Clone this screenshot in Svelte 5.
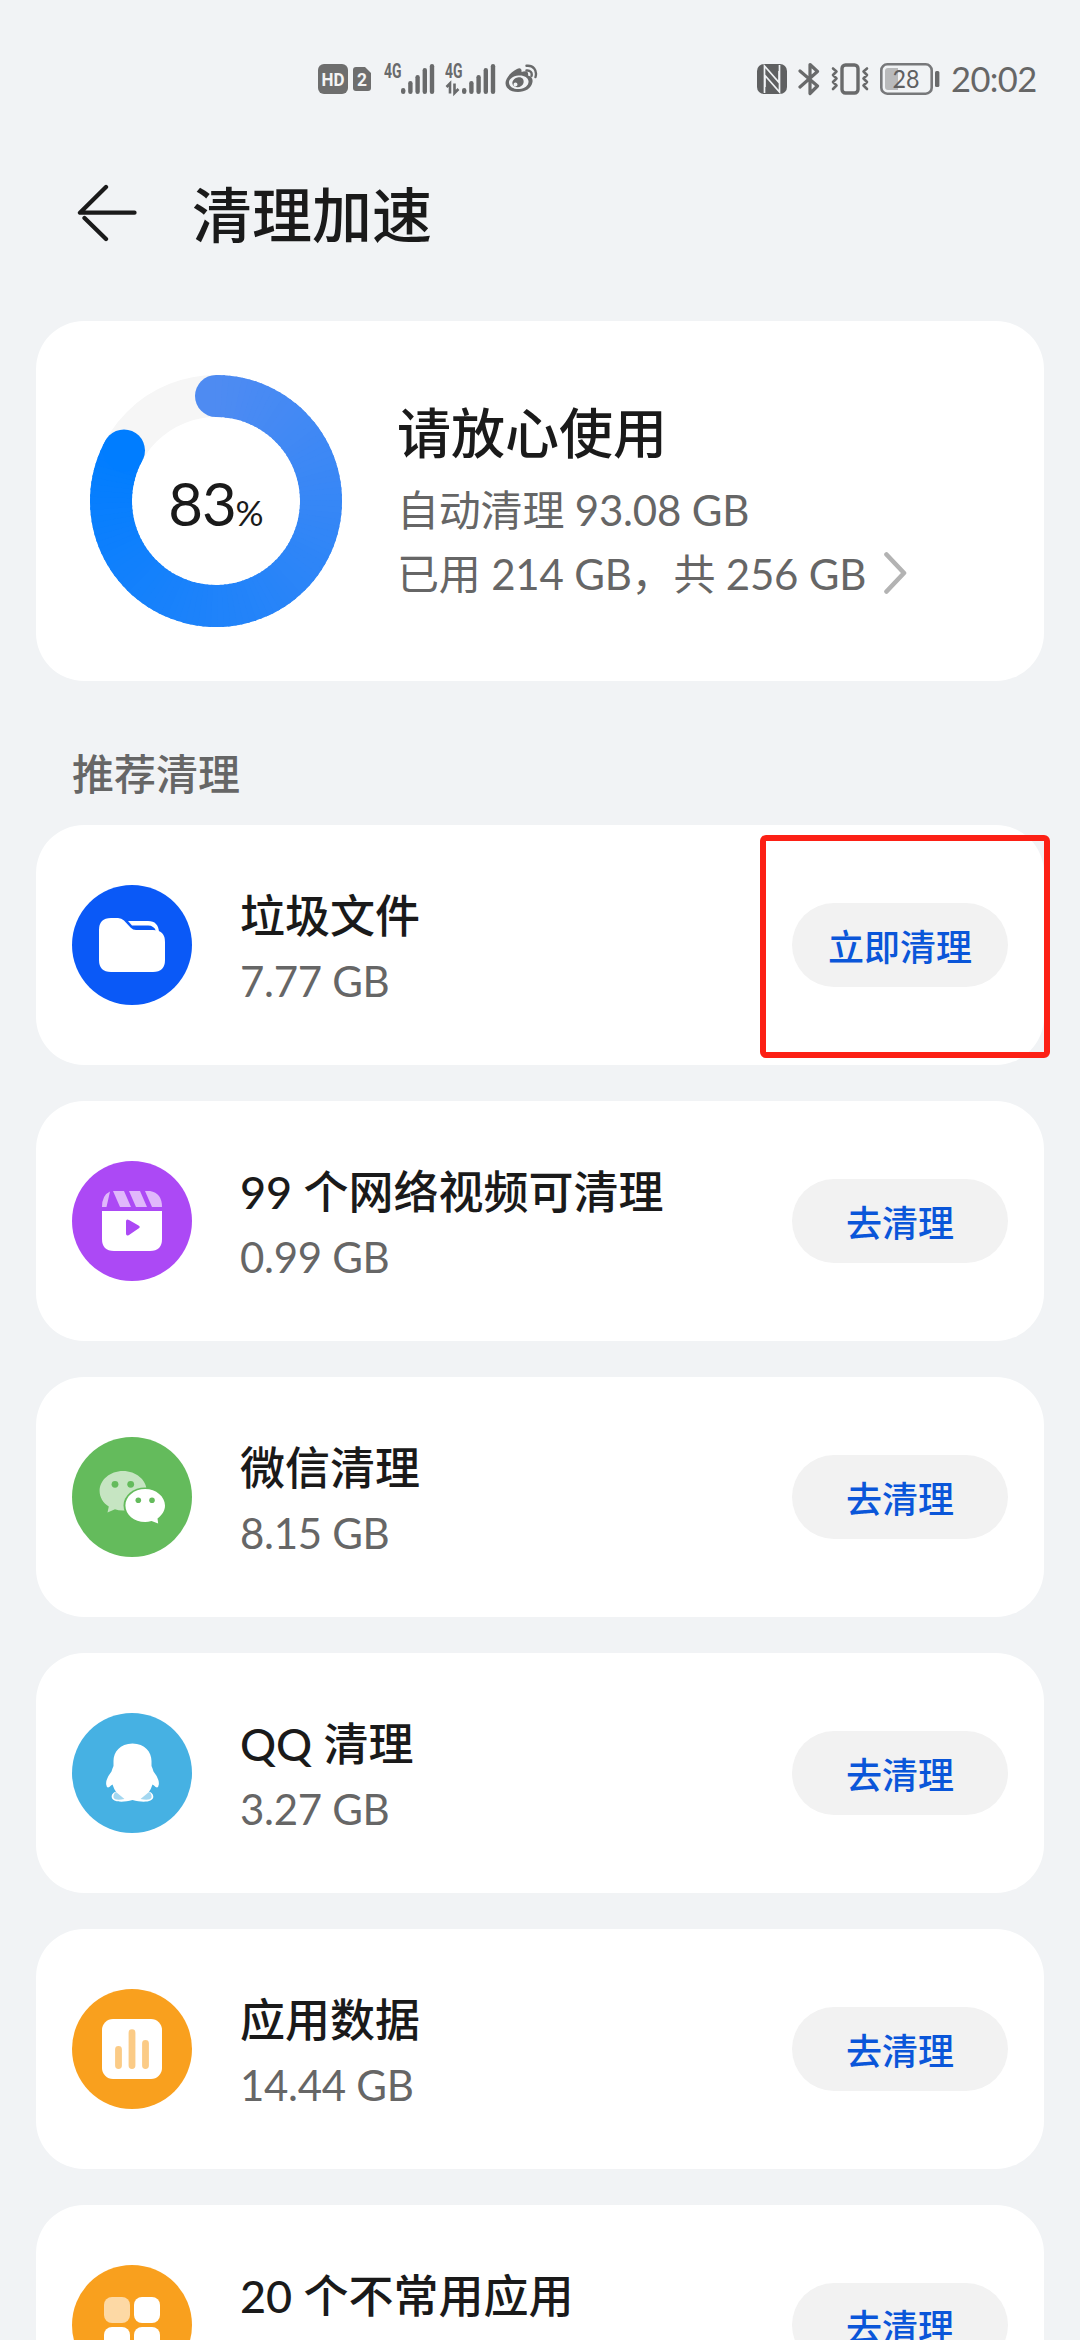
<script>
  const percent = 83;
  const start = [78, 139, 242];
  const end = [0, 125, 255];
  const steps = 100;

  function point(angle) {
    const a = ((angle - 90) * Math.PI) / 180;
    return [126 + 105 * Math.cos(a), 126 + 105 * Math.sin(a)];
  }
  function mix(t) {
    return `rgb(${start.map((s, i) => Math.round(s + (end[i] - s) * t)).join(',')})`;
  }

  const sweep = percent * 3.6;
  const segments = Array.from({ length: steps }, (_, i) => {
    const [x1, y1] = point((sweep * i) / steps);
    const [x2, y2] = point(Math.min(sweep, (sweep * (i + 1.4)) / steps));
    return { d: `M${x1} ${y1}A105 105 0 0 1 ${x2} ${y2}`, color: mix(i / (steps - 1)) };
  });
  const first = point(0);
  const last = point(sweep);

  const rows = [
    { icon: 'folder', color: '#0a59f7', title: '垃圾文件', size: '7.77 GB', action: '立即清理', marked: true },
    { icon: 'video', color: '#ac49f5', title: '99 个网络视频可清理', size: '0.99 GB', action: '去清理' },
    { icon: 'wechat', color: '#64bb5c', title: '微信清理', size: '8.15 GB', action: '去清理' },
    { icon: 'qq', color: '#46b1e3', title: 'QQ 清理', size: '3.27 GB', action: '去清理' },
    { icon: 'chart', color: '#f9a01e', title: '应用数据', size: '14.44 GB', action: '去清理' },
    { icon: 'apps', color: '#f9a01e', title: '20 个不常用应用', size: '', action: '去清理' }
  ];
  const barHeights = [6, 13, 19, 26, 30];
</script>

{#snippet signal(data)}
  <svg class="signal" width="52" height="48" viewBox="0 -8 52 48">
    <text x="0" y="14.5" class="net" textLength="17.500" lengthAdjust="spacingAndGlyphs">4G</text>
    {#if data}
      <path d="M1.500 24L5 20.500V30.500M9.500 20.500V30L13.500 26" fill="none" stroke="#696a6b" stroke-width="2.600" />
    {/if}
    {#each barHeights as h, i}
      <rect x={17 + i * 7.2} y={31 - h} width="4.4" height={h} rx="2.2" fill="#696a6b" />
    {/each}
  </svg>
{/snippet}

<div class="screen">
  <div class="status">
    <div class="left">
      <svg class="hd" width="30" height="30" viewBox="0 0 30 30">
        <rect width="30" height="30" rx="6" fill="#6e6e6e" />
        <text x="3.500" y="21.500" class="badge" font-size="18" textLength="23" lengthAdjust="spacingAndGlyphs">HD</text>
      </svg>
      <svg class="sim" width="18" height="24" viewBox="0 0 18 24">
        <path d="M3 0H12L18 6V21Q18 24 15 24H3Q0 24 0 21V3Q0 0 3 0Z" fill="#6e6e6e" />
        <text x="4" y="19" class="badge" font-size="19" textLength="10" lengthAdjust="spacingAndGlyphs">2</text>
      </svg>
      {@render signal(false)}
      {@render signal(true)}
      <svg class="weibo" width="33" height="29" viewBox="0 0 33 29">
        <path fill-rule="evenodd" fill="#696a6b" d="M12 5C14.500 3.500 17 4 16.500 8C20 6.500 24 6.500 23 11.500C26.500 12.500 28 14.500 27.500 18C26.500 24.500 20 28 13 28C6 28 .5 24.500 .5 19C.5 14 6 8 12 5ZM13.500 11.500C7.500 12 3.500 15.500 4 19C4.500 23 9 25.500 14.500 25C20 24.500 24 21 23.500 17C23 13.500 19 11 13.500 11.500Z" />
        <path fill-rule="evenodd" fill="#696a6b" d="M12.500 13.500C16.500 12.500 19.500 15 18.500 19C17.500 22.500 13 24.500 9.500 22.500C5.500 20 7.500 14.500 12.500 13.500ZM10.500 18.500A2 2 0 1 0 12.500 20.300A2 2 0 0 0 10.500 18.500Z" />
        <path d="M21.500 6.500C25 6 27.500 8.500 26.500 12M21.500 1.800C28 1 32.500 6 30.500 13" fill="none" stroke="#696a6b" stroke-width="2.400" stroke-linecap="round" />
      </svg>
    </div>
    <div class="right">
      <svg class="nfc" width="30" height="30" viewBox="0 0 30 30">
        <rect width="30" height="30" rx="7" fill="#5f6061" />
        <path d="M7.500 29V2L22 18.500V7M22.500 1V28L8 11.500V23" fill="none" stroke="#f1f3f5" stroke-width="1.700" />
      </svg>
      <svg class="bt" width="22" height="34" viewBox="0 0 22 34">
        <path d="M2 9L19.500 24L12 31.500V2.500L19.500 9.500L2 25" fill="none" stroke="#696a6b" stroke-width="3.200" stroke-linejoin="round" stroke-linecap="round" />
      </svg>
      <svg class="vib" width="38" height="32" viewBox="0 0 38 32">
        <rect x="11" y="2" width="16" height="28" rx="3.500" fill="none" stroke="#696a6b" stroke-width="3.400" />
        <path d="M2 5.500L5.500 8.500L2 12L5.500 15.500L2 19L5.500 22.500L2 26M36 5.500L32.500 8.500L36 12L32.500 15.500L36 19L32.500 22.500L36 26" fill="none" stroke="#696a6b" stroke-width="2.600" stroke-linejoin="round" stroke-linecap="round" />
      </svg>
      <svg class="bat" width="60" height="32" viewBox="0 0 60 32">
        <rect x="1.300" y="1.300" width="50.400" height="29.400" rx="6" fill="none" stroke="#77787a" stroke-width="2.600" />
        <path d="M8 5H18V27H8Q5 27 5 24V8Q5 5 8 5Z" fill="#b9babb" />
        <rect x="55" y="8" width="4.400" height="16" rx="1.500" fill="#696a6b" />
        <text x="12.500" y="25" class="level" textLength="27" lengthAdjust="spacingAndGlyphs">28</text>
      </svg>
      <span class="clock">20:02</span>
    </div>
  </div>

  <header>
    <svg width="62" height="58" viewBox="0 0 62 58">
      <path d="M30 3L4 28.700H58.500M8.500 34L30 55" fill="none" stroke="#1a1a1a" stroke-width="4.300" stroke-linecap="round" stroke-linejoin="round" />
    </svg>
    <h1>清理加速</h1>
  </header>

  <section class="card summary">
    <div class="ring">
      <svg width="252" height="252" viewBox="0 0 252 252">
        <circle cx="126" cy="126" r="105" fill="none" stroke="#f6f6f6" stroke-width="42" />
        <circle cx={first[0]} cy={first[1]} r="21" fill={mix(0)} />
        {#each segments as s}
          <path d={s.d} fill="none" stroke={s.color} stroke-width="42" />
        {/each}
        <circle cx={last[0]} cy={last[1]} r="21" fill={mix(1)} />
      </svg>
      <div class="percent"><span class="num">83</span><span class="sign">%</span></div>
    </div>
    <div class="info">
      <h2>请放心使用</h2>
      <p>自动清理 93.08 GB</p>
      <p class="used">
        <span>已用 214 GB，共 256 GB</span>
        <svg width="24" height="44" viewBox="0 0 24 44">
          <path d="M3.500 3.500L21 22L3.500 40.500" fill="none" stroke="#b3b3b3" stroke-width="4.600" stroke-linecap="round" stroke-linejoin="round" />
        </svg>
      </p>
    </div>
  </section>

  <h3>推荐清理</h3>

  <div class="list">
    {#each rows as row}
      <section class="card row">
        <svg width="120" height="120" viewBox="0 0 120 120">
          <circle cx="60" cy="60" r="60" fill={row.color} />
          {#if row.icon === 'folder'}
            <path d="M39 33H46Q49.500 33 52 35.500L58.500 42.500Q61 45 64 45H81Q93 45 93 57V75Q93 87 81 87H39Q27 87 27 75V45Q27 33 39 33Z" fill="#fff" />
            <path d="M56 36H76Q86.500 36 87 47.500L84 46Q82 40.500 76 40.500H60Z" fill="#fff" />
          {:else if row.icon === 'video'}
            <path d="M30 50H90V78Q90 90 78 90H42Q30 90 30 78Z" fill="#fff" />
            <path d="M30 46Q30 34 38 30.500L34.500 46ZM41 30H52L59 46H48ZM57 30H68L75 46H64ZM73 30H78Q90 32 90 46H80Z" fill="#e0b8fb" />
            <path d="M54 60.500Q54 57.500 57 59L66.500 64.500Q69 66 66.500 67.500L57 74Q54 75.500 54 72.500Z" fill={row.color} />
          {:else if row.icon === 'wechat'}
            <path d="M51 34C64 34 74.700 43 74.700 54C74.700 65 64 73.500 51 73.500Q46 73.500 43 72.300L35.500 75.500L36.800 69.500C31 66 27.600 60 27.600 54C27.600 43 38 34 51 34Z" fill="#c6e5c2" />
            <ellipse cx="73" cy="68.500" rx="21.500" ry="18" fill={row.color} />
            <path d="M73.200 52C84 52 93 59.500 93 68.500C93 74 90 78 85.500 81.500L86.200 86.500L79.500 84Q76 85 73.200 85C62 85 53.400 77.500 53.400 68.500C53.400 59.500 62 52 73.200 52Z" fill="#fff" />
            <g fill={row.color}>
              <circle cx="43" cy="47.300" r="3.400" /><circle cx="58.700" cy="47.300" r="3.400" />
              <circle cx="66.300" cy="63.200" r="2.800" /><circle cx="80" cy="63.200" r="2.800" />
            </g>
          {:else if row.icon === 'qq'}
            <path d="M47 78C42 78.500 39.500 81 39.700 84C40 89 50 90 60.500 87C71 90 81 89 81.300 84C81.500 81 79 78.500 74 78Z" fill="#fff" />
            <path d="M60.500 30.400C73 30.400 79.500 39 79.500 48V53Q80.500 55 81.500 58.500Q87.500 66 86.800 71.500Q86 77 82 72.500L80.500 71.500Q78 80 70 86H51Q43 80 40.500 71.500L39 72.500Q35 77 34.200 71.500Q33.500 66 39.500 58.500Q40.500 55 41.500 53V48C41.500 39 48 30.400 60.500 30.400Z" fill="#fff" />
            <path d="M44 79L52.500 86Q43 88 41.500 84.500Q41 81 44 79ZM77 79L68.500 86Q78 88 79.500 84.500Q80 81 77 79Z" fill="#a3d7f0" />
          {:else if row.icon === 'chart'}
            <rect x="30" y="30" width="60" height="60" rx="11" fill="#fff" />
            <path d="M46.500 60.300V76.500M60 43.700V76.500M73.500 54.300V76.500" fill="none" stroke="#fbcb86" stroke-width="6.800" stroke-linecap="round" />
          {:else}
            <rect x="32" y="32" width="26" height="26" rx="8" fill="#fdd9a5" />
            <rect x="62" y="32" width="26" height="26" rx="8" fill="#fff" />
            <rect x="32" y="62" width="26" height="26" rx="8" fill="#fff" />
            <rect x="62" y="62" width="26" height="26" rx="8" fill="#fff" />
          {/if}
        </svg>
        <div class="text">
          <div class="title">{row.title}</div>
          <div class="size">{row.size}</div>
        </div>
        <button>{row.action}</button>
        {#if row.marked}<div class="marker"></div>{/if}
      </section>
    {/each}
  </div>
</div>

<style>
  :global(body) { margin: 0; background: #f1f3f5; }
  .screen {
    box-sizing: border-box;
    width: 1080px;
    height: 2340px;
    overflow: hidden;
    padding: 0 36px;
    background: #f1f3f5;
    color: #1a1a1a;
    font-family: Lato, "Noto Sans CJK SC", sans-serif;
  }
  svg { display: block; flex: none; }
  h1, h2, h3, p { margin: 0; font-weight: 500; }
  .status {
    display: flex;
    justify-content: space-between;
    height: 156px;
    padding: 0 10px 0 282px;
    box-sizing: border-box;
  }
  .left, .right { display: flex; align-items: center; height: 157px; }
  .sim { margin-left: 5px; }
  .signal { margin-left: 13px; }
  .signal + .signal { margin-left: 9px; }
  .weibo { margin-left: 8px; }
  .net { font: 700 19.5px Roboto, sans-serif; fill: #696a6b; }
  .badge { font-family: Roboto, sans-serif; font-weight: 700; fill: #f4f4f4; }
  .level { font: 400 25px Lato, sans-serif; fill: #5f6061; }
  .bt { margin-left: 11px; }
  .vib { margin-left: 11px; }
  .bat { margin-left: 11px; }
  .clock {
    margin-left: 11px;
    width: 83px;
    font-size: 34.5px;
    letter-spacing: -0.6px;
    line-height: 40px;
    color: #666;
    white-space: nowrap;
  }
  header {
    display: flex;
    align-items: center;
    gap: 54px;
    height: 114px;
    padding: 0 40px;
    margin-bottom: 51px;
  }
  h1 { font-size: 60px; line-height: 80px; padding-top: 4px; }
  .card { background: #fff; border-radius: 48px; }
  .summary {
    display: flex;
    align-items: center;
    gap: 55px;
    height: 360px;
    padding: 0 54px;
    box-sizing: border-box;
  }
  .ring { display: grid; flex: none; }
  .ring > * { grid-area: 1 / 1; }
  .percent { place-self: center; display: flex; align-items: baseline; line-height: 72px; padding-top: 12px; }
  .num { font-size: 60px; letter-spacing: -1.2px; }
  .sign { font-size: 35px; }
  h2 { font-size: 54px; line-height: 74px; margin-bottom: 7px; }
  p { font-size: 42px; line-height: 64px; font-weight: 400; color: #666; letter-spacing: -0.2px; white-space: nowrap; }
  .used { display: flex; align-items: center; gap: 17px; }
  .used svg { margin-top: -2px; }
  h3 {
    height: 144px;
    padding: 65px 36px 0;
    box-sizing: border-box;
    font-size: 42px;
    line-height: 56px;
    color: #666;
  }
  .list { display: flex; flex-direction: column; gap: 36px; }
  .row {
    position: relative;
    display: flex;
    align-items: center;
    height: 240px;
    padding: 0 36px;
    box-sizing: border-box;
    flex: none;
  }
  .text { flex: 1; padding: 5px 0 0 48px; white-space: nowrap; }
  .title { font-size: 45px; line-height: 66px; font-weight: 500; }
  .size { min-height: 64px; font-size: 42px; line-height: 64px; letter-spacing: -0.3px; color: #666; }
  button {
    width: 216px;
    height: 84px;
    padding: 0;
    border: 0;
    border-radius: 42px;
    background: #f2f2f2;
    color: #0a56d9;
    font-family: inherit;
    font-size: 36px;
    font-weight: 500;
  }
  .marker {
    position: absolute;
    left: 724px;
    top: 10px;
    width: 290px;
    height: 223px;
    box-sizing: border-box;
    border: 6px solid #fc2015;
    border-radius: 6px;
  }
</style>
